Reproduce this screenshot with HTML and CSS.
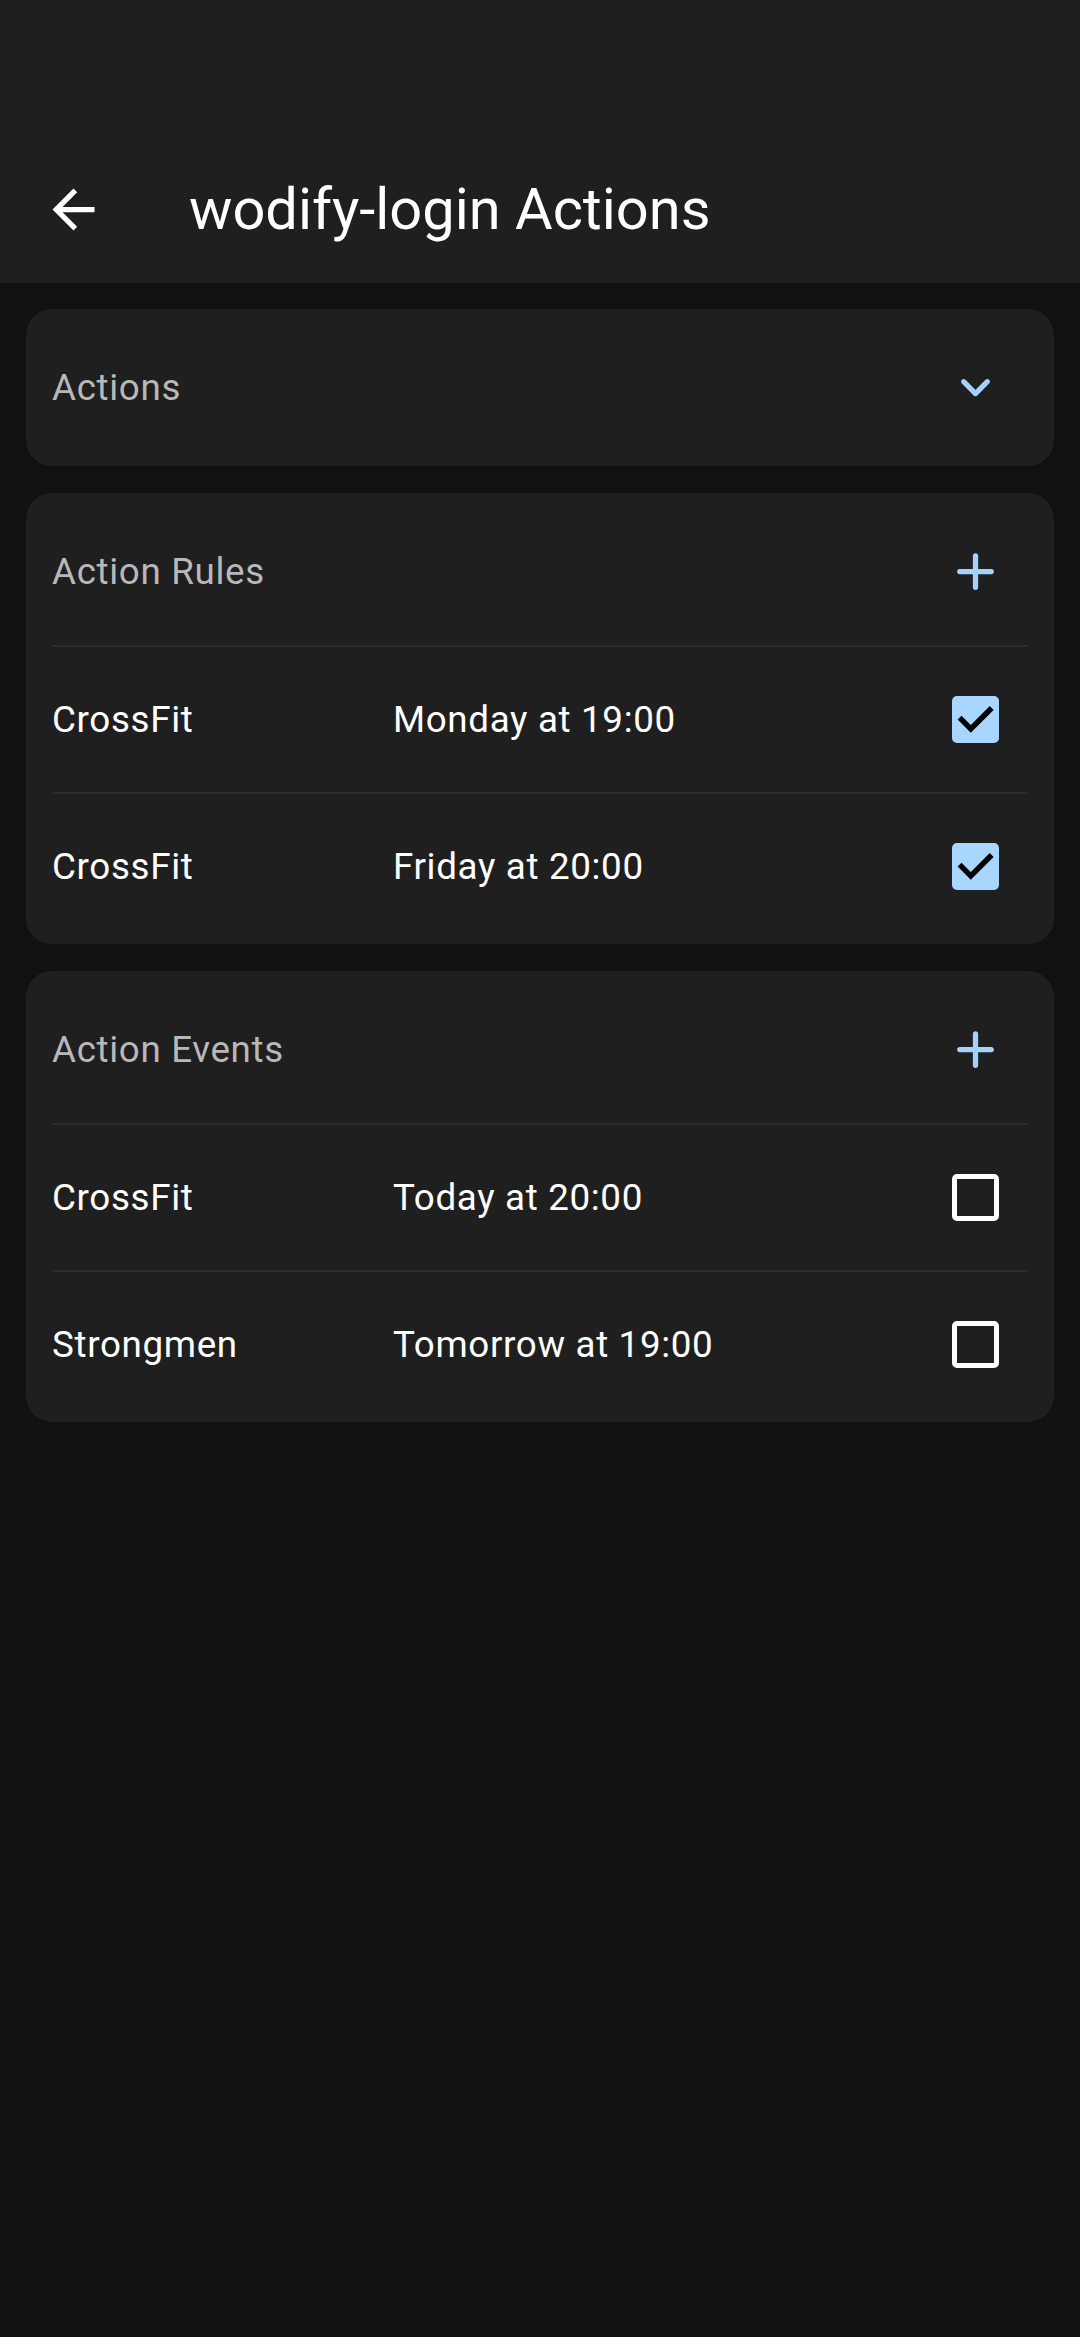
FILE: index.html
```html
<!DOCTYPE html>
<html lang="en">
<head>
<meta charset="utf-8">
<title>wodify-login Actions</title>
<link rel="stylesheet" href="styles.css">
</head>
<body>
<header class="appbar">
  <div class="statusbar"></div>
  <div class="toolbar">
    <button class="back" aria-label="Back">
      <svg viewBox="0 0 24 24" class="icon"><path d="M20 11H7.83l5.59-5.59L12 4l-8 8 8 8 1.41-1.41L7.83 13H20v-2z" fill="#ffffff"/></svg>
    </button>
    <h1 class="title">wodify-login Actions</h1>
  </div>
</header>
<main class="content">
  <section class="card">
    <div class="row header">
      <span class="label">Actions</span>
      <span class="action">
        <svg viewBox="0 0 24 24" class="icon"><polyline points="7.5,9.8 12,14.3 16.5,9.8" fill="none" stroke="#a4d2ff" stroke-width="2" stroke-linecap="round" stroke-linejoin="round"/></svg>
      </span>
    </div>
  </section>

  <section class="card">
    <div class="row header">
      <span class="label">Action Rules</span>
      <span class="action">
        <svg viewBox="0 0 24 24" class="icon"><path d="M12 6v12M6 12h12" fill="none" stroke="#a4d2ff" stroke-width="2" stroke-linecap="round"/></svg>
      </span>
    </div>
    <div class="row item">
      <span class="name">CrossFit</span>
      <span class="when">Monday at 19:00</span>
      <span class="action"><span class="check on"><svg viewBox="0 0 18 18"><polyline points="2.9,8.3 7.2,12.6 15.2,4.6" fill="none" stroke="#000" stroke-width="2.1"/></svg></span></span>
    </div>
    <div class="row item">
      <span class="name">CrossFit</span>
      <span class="when">Friday at 20:00</span>
      <span class="action"><span class="check on"><svg viewBox="0 0 18 18"><polyline points="2.9,8.3 7.2,12.6 15.2,4.6" fill="none" stroke="#000" stroke-width="2.1"/></svg></span></span>
    </div>
  </section>

  <section class="card">
    <div class="row header">
      <span class="label">Action Events</span>
      <span class="action">
        <svg viewBox="0 0 24 24" class="icon"><path d="M12 6v12M6 12h12" fill="none" stroke="#a4d2ff" stroke-width="2" stroke-linecap="round"/></svg>
      </span>
    </div>
    <div class="row item">
      <span class="name">CrossFit</span>
      <span class="when">Today at 20:00</span>
      <span class="action"><span class="check off"></span></span>
    </div>
    <div class="row item">
      <span class="name">Strongmen</span>
      <span class="when">Tomorrow at 19:00</span>
      <span class="action"><span class="check off"></span></span>
    </div>
  </section>
</main>
</body>
</html>
```

FILE: styles.css
```css
* { box-sizing: border-box; }

html, body {
  margin: 0;
  padding: 0;
}

body {
  background: #111111;
  font-family: Roboto, "Noto Sans", "Liberation Sans", sans-serif;
  color: #ffffff;
  width: 1080px;
  min-height: 2337px;
}

.appbar {
  background: #1f1f1f;
}

.statusbar {
  height: 136px;
}

.toolbar {
  height: 147px;
  display: flex;
  align-items: center;
}

.back {
  width: 147px;
  height: 147px;
  display: flex;
  align-items: center;
  justify-content: center;
  background: none;
  border: 0;
  padding: 0;
  margin: 0;
}

.icon {
  width: 63px;
  height: 63px;
  display: block;
}

.title {
  margin: 0 0 0 42px;
  font-size: 57.75px;
  font-weight: 400;
  line-height: 1;
  color: #ffffff;
  letter-spacing: 0;
}

.content {
  padding: 26px 26px 0;
  display: flex;
  flex-direction: column;
  gap: 27px;
}

.card {
  background: #1f1f1f;
  border-radius: 26px;
  padding: 5px 26px;
}

.row {
  height: 147px;
  display: flex;
  align-items: center;
  font-size: 36.75px;
  letter-spacing: 0.66px;
}

.row.item {
  border-top: 2px solid #2c2c2c;
}

.label {
  flex: 1;
  color: #b8b8b8;
}

.name {
  width: 341px;
  color: #ffffff;
}

.when {
  flex: 1;
  color: #ffffff;
}

.action {
  width: 105px;
  height: 105px;
  display: flex;
  align-items: center;
  justify-content: center;
}

.check {
  width: 47px;
  height: 47px;
  border-radius: 5px;
  display: block;
}

.check.on {
  background: #a8d6ff;
}

.check.on svg {
  width: 47px;
  height: 47px;
  display: block;
}

.check.off {
  border: 5px solid #ffffff;
}
```
